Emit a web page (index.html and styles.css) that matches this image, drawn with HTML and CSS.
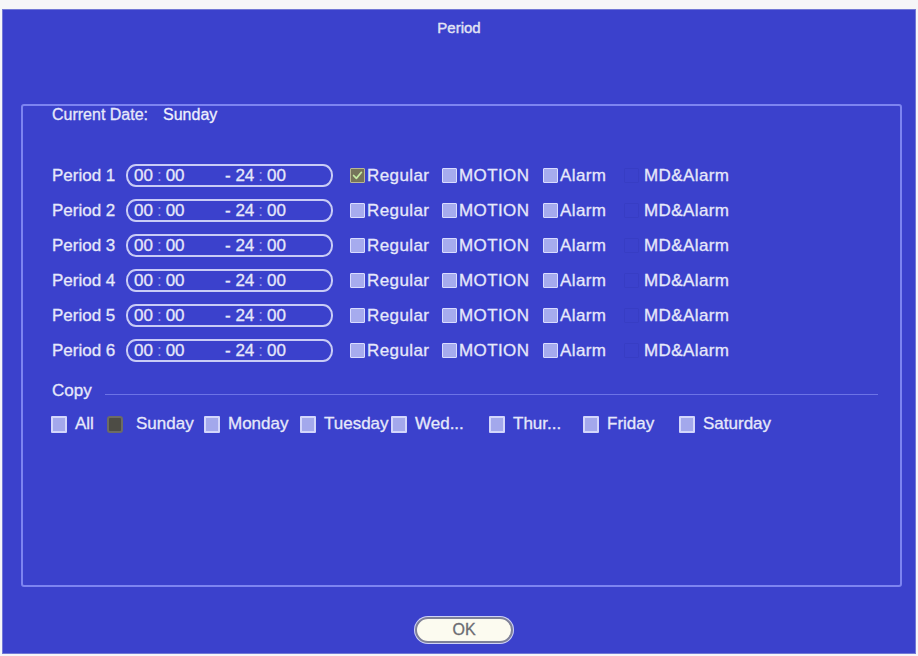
FILE: index.html
```html
<!DOCTYPE html>
<html lang="en">

<head>
    <meta charset="UTF-8">
    <meta name="viewport" content="width=device-width, initial-scale=1.0">
    <title>Period</title>
    <link rel="stylesheet" href="styles.css">
</head>

<body>
    <div class="window">
        <div class="title">Period</div>

        <div class="group">
            <div class="date">
                <span>Current Date:</span>
                <span class="date-val">Sunday</span>
            </div>

            <div class="periods">
                <div class="row">
                    <span class="row-label">Period 1</span>
                    <div class="time">
                        <span class="t-from">00<i>:</i>00</span>
                        <span class="t-to">- 24<i>:</i>00</span>
                    </div>
                    <div class="checks">
                        <label class="chk"><span class="cb on"><svg viewBox="0 0 15 15"><path d="M3 7.5 L6.2 10.8 L12 3.8" /></svg></span>Regular</label>
                        <label class="chk"><span class="cb"></span>MOTION</label>
                        <label class="chk"><span class="cb"></span>Alarm</label>
                        <label class="chk"><span class="cb ghost"></span>MD&amp;Alarm</label>
                    </div>
                </div>
                <div class="row">
                    <span class="row-label">Period 2</span>
                    <div class="time">
                        <span class="t-from">00<i>:</i>00</span>
                        <span class="t-to">- 24<i>:</i>00</span>
                    </div>
                    <div class="checks">
                        <label class="chk"><span class="cb"></span>Regular</label>
                        <label class="chk"><span class="cb"></span>MOTION</label>
                        <label class="chk"><span class="cb"></span>Alarm</label>
                        <label class="chk"><span class="cb ghost"></span>MD&amp;Alarm</label>
                    </div>
                </div>
                <div class="row">
                    <span class="row-label">Period 3</span>
                    <div class="time">
                        <span class="t-from">00<i>:</i>00</span>
                        <span class="t-to">- 24<i>:</i>00</span>
                    </div>
                    <div class="checks">
                        <label class="chk"><span class="cb"></span>Regular</label>
                        <label class="chk"><span class="cb"></span>MOTION</label>
                        <label class="chk"><span class="cb"></span>Alarm</label>
                        <label class="chk"><span class="cb ghost"></span>MD&amp;Alarm</label>
                    </div>
                </div>
                <div class="row">
                    <span class="row-label">Period 4</span>
                    <div class="time">
                        <span class="t-from">00<i>:</i>00</span>
                        <span class="t-to">- 24<i>:</i>00</span>
                    </div>
                    <div class="checks">
                        <label class="chk"><span class="cb"></span>Regular</label>
                        <label class="chk"><span class="cb"></span>MOTION</label>
                        <label class="chk"><span class="cb"></span>Alarm</label>
                        <label class="chk"><span class="cb ghost"></span>MD&amp;Alarm</label>
                    </div>
                </div>
                <div class="row">
                    <span class="row-label">Period 5</span>
                    <div class="time">
                        <span class="t-from">00<i>:</i>00</span>
                        <span class="t-to">- 24<i>:</i>00</span>
                    </div>
                    <div class="checks">
                        <label class="chk"><span class="cb"></span>Regular</label>
                        <label class="chk"><span class="cb"></span>MOTION</label>
                        <label class="chk"><span class="cb"></span>Alarm</label>
                        <label class="chk"><span class="cb ghost"></span>MD&amp;Alarm</label>
                    </div>
                </div>
                <div class="row">
                    <span class="row-label">Period 6</span>
                    <div class="time">
                        <span class="t-from">00<i>:</i>00</span>
                        <span class="t-to">- 24<i>:</i>00</span>
                    </div>
                    <div class="checks">
                        <label class="chk"><span class="cb"></span>Regular</label>
                        <label class="chk"><span class="cb"></span>MOTION</label>
                        <label class="chk"><span class="cb"></span>Alarm</label>
                        <label class="chk"><span class="cb ghost"></span>MD&amp;Alarm</label>
                    </div>
                </div>
            </div>

            <div class="copy-head">
                <span>Copy</span>
                <div class="copy-line"></div>
            </div>

            <div class="days">
                <label class="day"><span class="cb big"></span><span class="day-name">All</span></label>
                <label class="day"><span class="cb big dark"></span><span class="day-name sun">Sunday</span></label>
                <label class="day"><span class="cb big"></span><span class="day-name">Monday</span></label>
                <label class="day"><span class="cb big"></span><span class="day-name">Tuesday</span></label>
                <label class="day"><span class="cb big"></span><span class="day-name">Wed...</span></label>
                <label class="day"><span class="cb big"></span><span class="day-name">Thur...</span></label>
                <label class="day"><span class="cb big"></span><span class="day-name">Friday</span></label>
                <label class="day"><span class="cb big"></span><span class="day-name">Saturday</span></label>
            </div>
        </div>

        <div class="footer">
            <button class="btn-ok">OK</button>
        </div>
    </div>
</body>

</html>
```

FILE: styles.css
```css
html {
    font-family: "Liberation Sans", Arial, sans-serif;
    font-size: 17px;
}

body {
    margin: 0;
    background: #f6f6f8;
}

.window {
    margin: 9px 2px 0 2px;
    height: 645px;
    box-sizing: border-box;
    border: 1px solid #7379d6;
    background: #3b41cc;
    color: #e6e8fa;
    display: flex;
    flex-direction: column;
}

.title {
    height: 94px;
    box-sizing: border-box;
    padding-top: 9px;
    line-height: 18px;
    font-size: 15px;
    text-align: center;
    color: #e2e4f4;
    -webkit-text-stroke: 0.4px #e2e4f4;
}

.group {
    height: 483px;
    box-sizing: border-box;
    margin: 0 13px 0 18px;
    border: 2px solid #7d84f0;
    border-radius: 3px;
}

.date {
    padding-left: 29px;
    font-size: 16px;
    line-height: 18px;
    display: flex;
    gap: 15px;
    -webkit-text-stroke: 0.3px #e6e8fa;
}

.date-val {
    color: #f2f3ff;
}

.periods {
    margin-top: 34px;
    padding-left: 29px;
}

.row {
    height: 35px;
    display: flex;
    align-items: center;
    -webkit-text-stroke: 0.3px #e6e8fa;
}

.row-label {
    width: 74px;
}

.time {
    width: 207px;
    height: 23px;
    box-sizing: border-box;
    margin-right: 17px;
    border: 2px solid #c9ccf6;
    border-radius: 10px / 11px;
    padding-left: 6px;
    display: flex;
    align-items: center;
    line-height: 18px;
}

.time i {
    font-style: normal;
    color: #9aa0e6;
    -webkit-text-stroke: 0;
    margin: 0 4px;
}

.t-from {
    width: 91px;
}

.checks {
    display: grid;
    grid-template-columns: 92px 101px 81px auto;
}

.chk {
    display: flex;
    align-items: center;
    gap: 2px;
    letter-spacing: 0.4px;
}

.cb {
    width: 15px;
    height: 15px;
    box-sizing: border-box;
    flex: none;
    background: #a6abee;
    border: 1px solid #d9dcff;
    border-radius: 1px;
    display: inline-block;
}

.cb.on {
    background: #76745a;
    border-color: #b9b893;
}

.cb svg {
    display: block;
    width: 100%;
    height: 100%;
}

.cb svg path {
    fill: none;
    stroke: #c6eca2;
    stroke-width: 2;
    stroke-linecap: round;
    stroke-linejoin: round;
}

/* disabled box, almost the same shade as the panel */
.cb.ghost {
    background: transparent;
    border: 1px solid rgba(52, 58, 190, 0.55);
    margin-right: 3px;
}

.copy-head {
    margin-top: 14px;
    padding: 0 22px 0 29px;
    display: flex;
    line-height: 18px;
    -webkit-text-stroke: 0.3px #e6e8fa;
}

.copy-line {
    flex: 1;
    height: 1px;
    margin: 12px 0 0 13px;
    background: #6c73e6;
}

.days {
    margin-top: 15px;
    padding-left: 28px;
    display: grid;
    grid-template-columns: 56px 97px 96px 91px 98px 94px 96px auto;
    line-height: 18px;
    -webkit-text-stroke: 0.3px #e6e8fa;
}

.day {
    display: flex;
    align-items: center;
}

.cb.big {
    width: 16px;
    height: 17px;
    border: 2px solid #d3d6fb;
    background: #a3a8ec;
}

.cb.dark {
    background: #4d4c45;
    border-color: #6c6b64;
    border-radius: 3px;
}

.day-name {
    margin-left: 8px;
}

.day-name.sun {
    margin-left: 13px;
}

.footer {
    margin-top: 30px;
    padding-left: 10px;
    display: flex;
    justify-content: center;
}

.btn-ok {
    width: 98px;
    height: 26px;
    box-sizing: border-box;
    padding: 0;
    border: 2px solid #7f8198;
    border-radius: 13px;
    box-shadow: 0 0 0 1px #cfd2f7;
    background: #fcfbf0;
    color: #6c6c72;
    font: 16px "Liberation Sans", Arial, sans-serif;
    -webkit-text-stroke: 0.3px #6c6c72;
}
```
